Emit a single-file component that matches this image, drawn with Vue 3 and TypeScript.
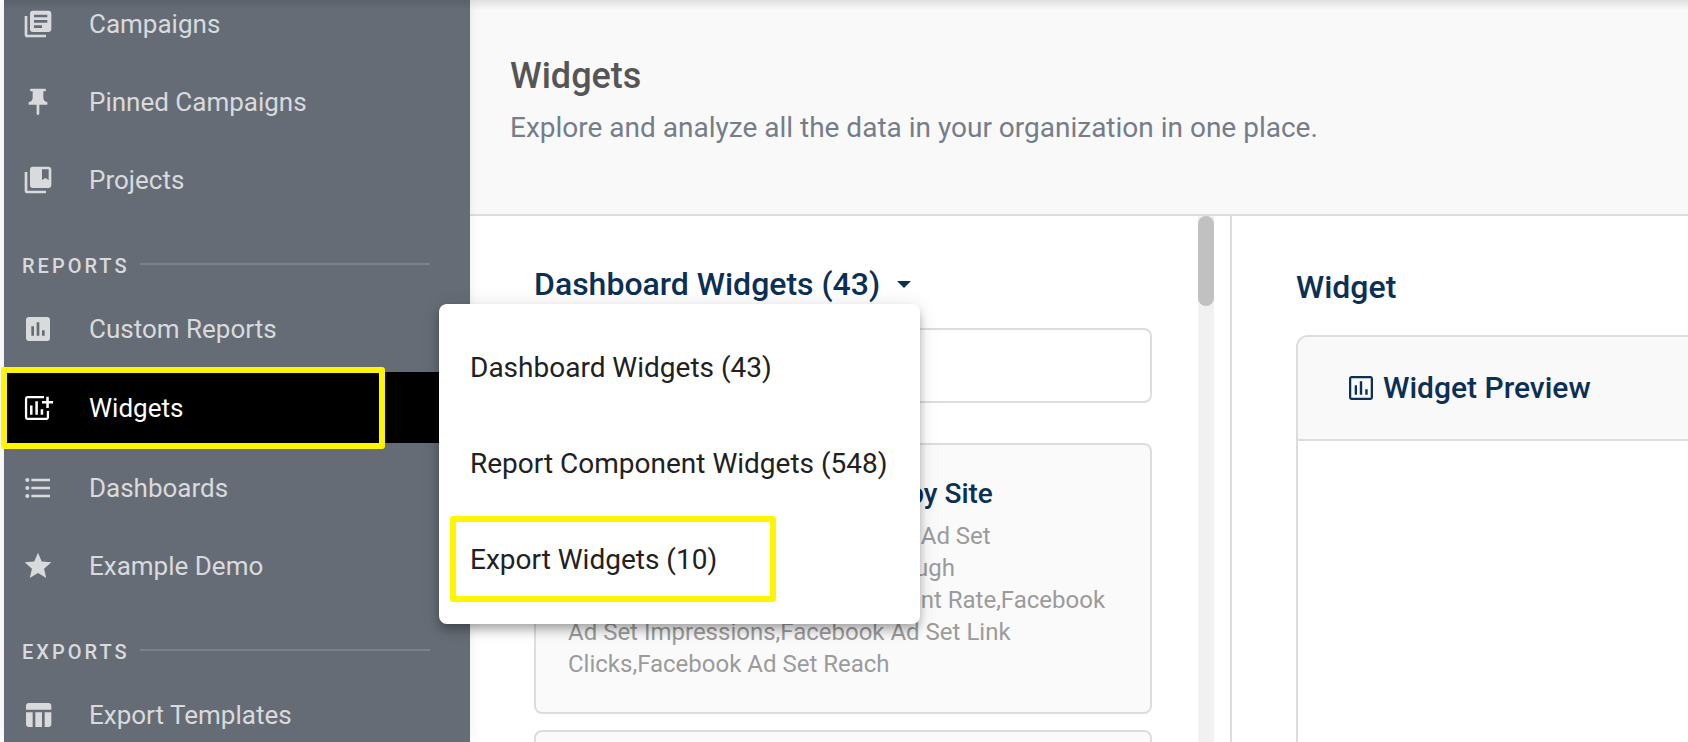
<script setup lang="ts">
import { ref } from 'vue'

interface NavItem {
  label: string
  icon: string
  active?: boolean
}
interface NavSection {
  title: string
  items: NavItem[]
}

const icons: Record<string, string> = {
  library:
    'M4 6H2v14c0 1.1.9 2 2 2h14v-2H4V6zm16-4H8c-1.1 0-2 .9-2 2v12c0 1.1.9 2 2 2h12c1.1 0 2-.9 2-2V4c0-1.1-.9-2-2-2zm-1 9H9V9h10v2zm-4 4H9v-2h6v2zm4-8H9V5h10v2z',
  pin: 'M16 9V4h1c.55 0 1-.45 1-1s-.45-1-1-1H7c-.55 0-1 .45-1 1s.45 1 1 1h1v5c0 1.66-1.34 3-3 3v2h5.97v7l1 1 1-1v-7H19v-2c-1.66 0-3-1.34-3-3z',
  bookmarks:
    'M4 6H2v14c0 1.1.9 2 2 2h14v-2H4V6zm16-4H8c-1.1 0-2 .9-2 2v12c0 1.1.9 2 2 2h12c1.1 0 2-.9 2-2V4c0-1.1-.9-2-2-2zm0 10l-2.5-1.5L15 12V4h5v8z',
  chart:
    'M19 3H5c-1.1 0-2 .9-2 2v14c0 1.1.9 2 2 2h14c1.1 0 2-.9 2-2V5c0-1.1-.9-2-2-2zM9 17H7v-7h2v7zm4 0h-2V7h2v10zm4 0h-2v-4h2v4z',
  addChart:
    'M16.5 3H4.2C3.100 3 2.200 3.900 2.200 5v14c0 1.100.9 2 2 2h14.100c1.100 0 2-.9 2-2v-4.800h-1.700v5.100H3.900V4.700h12.600zM6 10.200h1.900V17H6zM10 7h1.900v10H10zM14 13h1.900v4H14zM18.200 3.500h1.900v3.300h3.200v1.900h-3.200V12h-1.900V8.700H15V6.800h3.200z',
  list: 'M4 10.5c-.83 0-1.5.67-1.5 1.5s.67 1.5 1.5 1.5 1.5-.67 1.5-1.5-.67-1.5-1.5-1.5zm0-6c-.83 0-1.5.67-1.5 1.5S3.17 7.5 4 7.5 5.5 6.83 5.5 6 4.83 4.5 4 4.5zm0 12c-.83 0-1.5.68-1.5 1.5s.68 1.5 1.5 1.5 1.5-.68 1.5-1.5-.67-1.5-1.5-1.5zM7 19h14v-2H7v2zm0-6h14v-2H7v2zm0-8v2h14V5H7z',
  star: 'M12 17.27L18.18 21l-1.64-7.03L22 9.24l-7.19-.61L12 2 9.19 8.63 2 9.24l5.46 4.73L5.82 21z',
  table:
    'M10 10.02h5V21h-5zM17 21h3c1.1 0 2-.9 2-2v-9h-5v11zm3-18H5c-1.1 0-2 .9-2 2v3h19V5c0-1.1-.9-2-2-2zM3 19c0 1.1.9 2 2 2h3V10H3v9z',
  chartOutline:
    'M9 17H7.300v-7H9v7zm3.900 0h-1.800V7h1.800v10zm4.100 0h-1.800v-4H17v4zm2.300 2.300H4.700V4.700h14.600v14.600zM19 3H5c-1.100 0-2 .9-2 2v14c0 1.100.9 2 2 2h14c1.100 0 2-.9 2-2V5c0-1.100-.9-2-2-2z',
}

const sections: NavSection[] = [
  {
    title: '',
    items: [
      { label: 'Campaigns', icon: 'library' },
      { label: 'Pinned Campaigns', icon: 'pin' },
      { label: 'Projects', icon: 'bookmarks' },
    ],
  },
  {
    title: 'REPORTS',
    items: [
      { label: 'Custom Reports', icon: 'chart' },
      { label: 'Widgets', icon: 'addChart', active: true },
      { label: 'Dashboards', icon: 'list' },
      { label: 'Example Demo', icon: 'star' },
    ],
  },
  {
    title: 'EXPORTS',
    items: [{ label: 'Export Templates', icon: 'table' }],
  },
]

const options = [
  { label: 'Dashboard Widgets (43)', marked: false },
  { label: 'Report Component Widgets (548)', marked: false },
  { label: 'Export Widgets (10)', marked: true },
]

const cardLines = [
  'Facebook Ad Set CPM,Facebook Ad Set',
  'Cost,Facebook Ad Set Click Through',
  'Rate,Facebook Ad Set Engagement Rate,Facebook',
  'Ad Set Impressions,Facebook Ad Set Link',
  'Clicks,Facebook Ad Set Reach',
]

const menuOpen = ref(true)
const search = ref('')
</script>

<template>
  <div class="app">
    <nav class="sidebar" aria-label="Main">
      <section v-for="section in sections" :key="section.title" class="group">
        <h2 v-if="section.title" class="group-title">{{ section.title }}</h2>
        <ul class="links">
          <li v-for="item in section.items" :key="item.label">
            <a href="#" class="link" :class="{ active: item.active }">
              <svg class="link-icon" viewBox="0 0 24 24" aria-hidden="true">
                <path :d="icons[item.icon]" />
              </svg>
              {{ item.label }}
              <span v-if="item.active" class="mark mark-link"></span>
            </a>
          </li>
        </ul>
      </section>
    </nav>

    <main class="main">
      <header class="page-head">
        <h1 class="title">Widgets</h1>
        <p class="subtitle">Explore and analyze all the data in your organization in one place.</p>
      </header>

      <div class="panes">
        <section class="pane list-pane">
          <div class="list">
            <button class="picker" type="button" :aria-expanded="menuOpen" @click="menuOpen = !menuOpen">
              Dashboard Widgets (43)
              <svg class="caret" viewBox="0 0 14 7" aria-hidden="true"><path d="M0 0h14L7 7z" /></svg>
            </button>
            <input v-model="search" class="search" type="text" aria-label="Search widgets" />
            <article class="card">
              <h3 class="card-title">Facebook Ad Set Overview by Site</h3>
              <p class="card-text">
                <span v-for="line in cardLines" :key="line" class="line">{{ line }}</span>
              </p>
            </article>
            <article class="card"></article>
          </div>
          <div class="track" aria-hidden="true"><div class="thumb"></div></div>
        </section>

        <section class="pane preview-pane">
          <h2 class="pane-title">Widget</h2>
          <div class="preview">
            <div class="preview-head">
              <svg class="preview-icon" viewBox="0 0 24 24" aria-hidden="true">
                <path :d="icons.chartOutline" />
              </svg>
              <h3 class="preview-title">Widget Preview</h3>
            </div>
          </div>
        </section>
      </div>
    </main>

    <div v-if="menuOpen" class="menu" role="menu">
      <button v-for="option in options" :key="option.label" class="option" type="button" role="menuitem">
        {{ option.label }}
        <span v-if="option.marked" class="mark mark-option"></span>
      </button>
    </div>
  </div>
</template>

<style>
body {
  margin: 0;
  background: #fff;
}
</style>

<style scoped>
.app {
  position: relative;
  display: flex;
  box-sizing: border-box;
  height: 100vh;
  padding-left: 4px;
  overflow: hidden;
  font-family: Roboto, 'Liberation Sans', sans-serif;
  color: #0b2f55;
}
.app::before {
  content: '';
  position: absolute;
  z-index: 3;
  top: 0;
  left: 4px;
  right: 0;
  height: 10px;
  background: linear-gradient(rgba(0, 0, 0, 0.1), rgba(0, 0, 0, 0));
}
h1,
h2,
h3,
p,
ul {
  margin: 0;
  padding: 0;
}
button {
  border: 0;
  background: none;
  font: inherit;
  color: inherit;
  text-align: left;
  cursor: pointer;
}

.sidebar {
  position: relative;
  z-index: 1;
  flex: 0 0 466px;
  background: #656c76;
  box-shadow: 0 0 12px rgba(0, 0, 0, 0.08);
}
.group:first-child {
  margin-top: -15px;
}
.group-title {
  display: flex;
  align-items: center;
  gap: 10px;
  box-sizing: border-box;
  height: 71px;
  padding: 22px 40px 0 18px;
  font-size: 20px;
  font-weight: 500;
  line-height: 24px;
  letter-spacing: 3px;
  color: #d9dadc;
}
.group-title::after {
  content: '';
  flex: 1;
  height: 2px;
  margin-bottom: 4px;
  background: #7b828c;
}
.links {
  list-style: none;
}
.link {
  position: relative;
  display: flex;
  align-items: center;
  gap: 35px;
  height: 78px;
  padding-left: 18px;
  font-size: 26px;
  line-height: 32px;
  color: #d9dadc;
  text-decoration: none;
}
.link.active {
  height: 71px;
  margin: 4px 0 6px;
  background: #000;
  color: #fff;
}
.link-icon {
  flex: none;
  width: 32px;
  height: 32px;
  fill: currentColor;
}

.mark {
  position: absolute;
  box-sizing: border-box;
  border: 6px solid #fff500;
  border-radius: 3px;
}
.mark-link {
  top: -5px;
  left: -3px;
  width: 384px;
  height: 82px;
}
.mark-option {
  top: 4px;
  left: 11px;
  width: 326px;
  height: 86px;
}

.main {
  display: flex;
  flex: 1;
  flex-direction: column;
  min-width: 0;
}
.page-head {
  padding: 52px 40px 68px;
  border-bottom: 2px solid #ddd;
  background: #f9f9f9;
}
.title {
  font-size: 36px;
  font-weight: 500;
  line-height: 48px;
  color: #555;
}
.subtitle {
  margin-top: 10px;
  font-size: 28px;
  line-height: 36px;
  color: #757d8a;
}
.panes {
  display: grid;
  flex: 1;
  grid-template-columns: 127fr 76fr;
  min-height: 0;
}
.pane {
  min-width: 0;
  overflow: hidden;
}
.list-pane {
  display: flex;
  padding-right: 16px;
  border-right: 2px solid #ddd;
}
.list {
  flex: 1;
  min-width: 0;
  padding: 48px 46px 0 64px;
}
.track {
  flex: 0 0 16px;
  background: #f1f1f1;
}
.thumb {
  height: 90px;
  border-radius: 8px;
  background: #c1c1c1;
}
.picker {
  display: flex;
  align-items: center;
  gap: 17px;
  padding: 0;
  font-size: 32px;
  font-weight: 500;
  line-height: 40px;
}
.caret {
  width: 14px;
  height: 7px;
  fill: currentColor;
}
.search {
  display: block;
  box-sizing: border-box;
  width: 100%;
  height: 75px;
  margin: 24px 0 40px;
  padding: 0 24px;
  border: 2px solid #ddd;
  border-radius: 8px;
  background: #fff;
  font: inherit;
  font-size: 28px;
}
.card {
  min-height: 100px;
  margin-bottom: 16px;
  padding: 31px 32px 32px;
  border: 2px solid #ddd;
  border-radius: 8px;
  background: #fafafa;
}
.card-title {
  margin-bottom: 8px;
  font-size: 28px;
  font-weight: 500;
  line-height: 36px;
}
.card-text {
  font-size: 24px;
  line-height: 32px;
  color: #9b9b9b;
}
.line {
  display: block;
  white-space: nowrap;
}

.preview-pane {
  display: flex;
  flex-direction: column;
  padding: 51px 0 0 64px;
}
.pane-title {
  font-size: 32px;
  font-weight: 500;
  line-height: 40px;
}
.preview {
  flex: 1;
  margin-top: 28px;
  border: 2px solid #ddd;
  border-width: 2px 0 0 2px;
  border-radius: 12px 0 0 0;
  overflow: hidden;
}
.preview-head {
  display: flex;
  align-items: center;
  gap: 6px;
  height: 102px;
  padding-left: 47px;
  border-bottom: 2px solid #ddd;
  background: #f9f9f9;
}
.preview-icon {
  width: 32px;
  height: 32px;
  fill: currentColor;
}
.preview-title {
  font-size: 30px;
  font-weight: 500;
  line-height: 40px;
}

.menu {
  position: absolute;
  z-index: 2;
  top: 304px;
  left: 439px;
  padding: 16px 0;
  border-radius: 8px;
  background: #fff;
  box-shadow:
    0 4px 8px -2px rgba(0, 0, 0, 0.2),
    0 8px 10px rgba(0, 0, 0, 0.14),
    0 2px 20px rgba(0, 0, 0, 0.12);
  color: #212121;
}
.option {
  position: relative;
  display: block;
  width: 100%;
  height: 96px;
  padding: 0 32px 0 31px;
  font-size: 28px;
  line-height: 36px;
  white-space: nowrap;
}
</style>
